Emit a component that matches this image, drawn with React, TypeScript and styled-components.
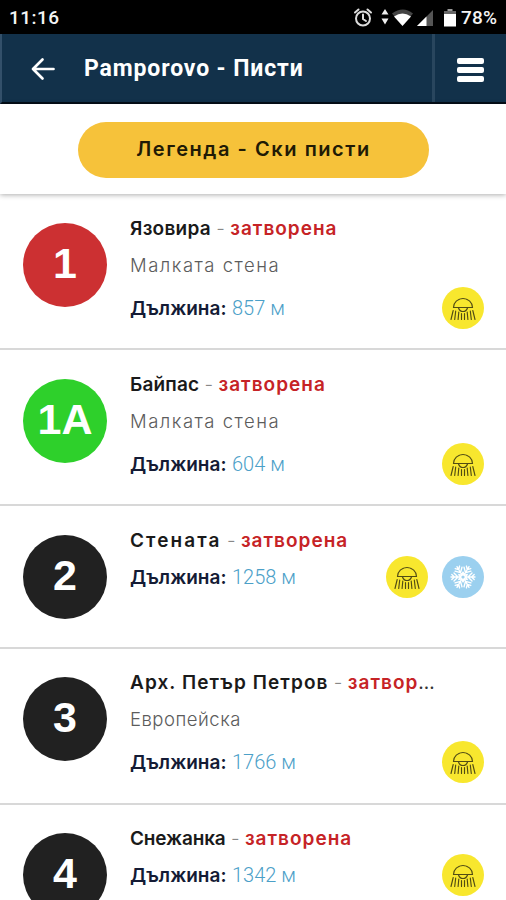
import React from 'react';
import styled, { createGlobalStyle } from 'styled-components';

const Global = createGlobalStyle`
  * { box-sizing: border-box; }
  body { margin: 0; background: #fff; }
`;

const Screen = styled.div`
  height: 900px;
  overflow: hidden;
  display: flex;
  flex-direction: column;
  font-family: Inter, "Liberation Sans", sans-serif;
`;

const StatusBar = styled.div`
  flex: none;
  height: 34px;
  padding: 0 8px 0 9px;
  display: flex;
  align-items: center;
  justify-content: space-between;
  background: #000;
  color: #f4f4f4;
  font: 500 19px/38px Roboto, sans-serif;
`;

const Clock = styled.span`
  padding-top: 2px;
  letter-spacing: 0.45px;
`;

const StatusIcons = styled.div`
  display: flex;
  align-items: center;
  svg { display: block; }
`;

const Battery = styled.span`
  width: 37px;
  margin-left: 5px;
  padding-top: 2px;
  letter-spacing: 0.2px;
`;

const Header = styled.header`
  flex: none;
  height: 70px;
  display: flex;
  align-items: stretch;
  background: #12314a;
  border-bottom: 2px solid #050e18;
  border-left: 2px solid #33506a;
  color: #fff;
`;

const BackButton = styled.button`
  width: 82px;
  padding: 2px 0 0 28px;
  border: 0;
  background: none;
  display: flex;
  align-items: center;
`;

const Title = styled.h1`
  flex: 1;
  margin: 0;
  font: 700 23px/69px Roboto, sans-serif;
  letter-spacing: 0.87px;
  white-space: nowrap;
`;

const MenuButton = styled.button`
  width: 74px;
  padding: 4px 0 0 0;
  border: 0;
  border-left: 3px solid #29465e;
  background: none;
  display: flex;
  flex-direction: column;
  align-items: center;
  justify-content: center;
  gap: 3px;
`;

const MenuLine = styled.span`
  width: 27px;
  height: 6px;
  border-radius: 2px;
  background: #fff;
`;

const LegendBar = styled.div`
  flex: none;
  height: 90px;
  padding: 18px 0 0 1px;
  display: flex;
  justify-content: center;
  align-items: flex-start;
  background: #fff;
  box-shadow: 0 1px 5px rgba(0, 0, 0, 0.32);
  z-index: 1;
`;

const LegendButton = styled.button`
  width: 351px;
  height: 56px;
  padding: 0 0 2px;
  border: 0;
  border-radius: 28px;
  background: #f6c23a;
  color: #211a05;
  font: 600 20px/54px Inter, sans-serif;
  letter-spacing: 1.55px;
  white-space: nowrap;
`;

const Row = styled.li<{ $compact: boolean }>`
  height: ${p => (p.$compact ? 143 : 156)}px;
  padding: 29px 22px 0 23px;
  display: flex;
  align-items: flex-start;
  border-bottom: 2px solid #d8d8d8;
  &:nth-child(n + 4) { padding-top: 28px; }
`;

const List = styled.ul`
  margin: 0;
  padding: 0;
  list-style: none;
`;

const Badge = styled.div<{ $color: string }>`
  flex: none;
  width: 84px;
  height: 84px;
  margin-right: 23px;
  border-radius: 50%;
  background: ${p => p.$color};
  color: #fff;
  text-align: center;
  font: 700 43px/80px "Liberation Sans", Arial, sans-serif;
`;

const Body = styled.div`
  flex: 1;
  min-width: 0;
`;

const Name = styled.div<{ $track: number }>`
  width: 314px;
  height: 24px;
  margin-top: -6px;
  overflow: hidden;
  text-overflow: ellipsis;
  white-space: nowrap;
  color: #333;
  font-size: 19px;
  line-height: 24px;
  letter-spacing: ${p => p.$track}px;
  b { color: #1a1a1a; font-weight: 600; }
`;

const Dash = styled.span`
  color: #888;
  font-weight: 300;
  letter-spacing: 0;
`;

const Status = styled.strong`
  color: #c62326;
  font-weight: 600;
  letter-spacing: 1px;
`;

const Area = styled.div<{ $track: number }>`
  height: 24px;
  margin-top: 12px;
  color: #5c5c5c;
  font-size: 18.5px;
  font-weight: 300;
  line-height: 24px;
  letter-spacing: ${p => p.$track}px;
`;

const Details = styled.div<{ $gap: number }>`
  height: 42px;
  margin-top: ${p => p.$gap}px;
  display: flex;
  align-items: center;
  justify-content: space-between;
`;

const Length = styled.div`
  color: #4ba0c8;
  font: 300 20px/24px Roboto, sans-serif;
  b {
    display: inline-block;
    width: 102px;
    color: #141b35;
    font: 600 19px/24px Inter, sans-serif;
  }
`;

const Features = styled.div`
  display: flex;
  gap: 14px;
`;

const Feature = styled.span<{ $color: string }>`
  width: 42px;
  height: 42px;
  border-radius: 50%;
  background: ${p => p.$color};
  svg { display: block; }
`;

const LampIcon = () => (
  <svg width="42" height="42" viewBox="0 0 42 42" fill="none" stroke="#514c14" strokeWidth="1.15" strokeLinecap="round">
    <path d="M11.500 20.500a9.500 9 0 0 1 19 0zM16 13q5-3 10 0M16.500 21q1.200 3.500 4.500 3.500t4.500-3.500" />
    <path d="M11.200 23.500 9 32.500M13.700 24l-1 8.500M16.800 25l-.7 7.500M19.500 26.500v6M22.500 26.500v6M25.200 25l.7 7.500M28.300 24l1 8.500M30.800 23.500l2.200 9" />
  </svg>
);

const SnowIcon = () => (
  <svg width="42" height="42" viewBox="0 0 42 42" fill="none" stroke="#fff" strokeWidth="1.350" strokeLinecap="round">
    {[0, 60, 120, 180, 240, 300].map(a => (
      <path
        key={a}
        transform={`rotate(${a + 30} 21 21)`}
        d="M21 18.500V9M18.500 9.800 21 12.500l2.500-2.700M17 12l4 4 4-4M21 18.500l-2.600-1.500M21 18.500l2.600-1.500"
      />
    ))}
    <circle cx="21" cy="21" r="2.300" />
  </svg>
);

type Slope = {
  no: string;
  color: string;
  name: string;
  track: number;
  area?: string;
  areaTrack?: number;
  length: string;
  snow?: boolean;
};

const slopes: Slope[] = [
  { no: '1', color: '#cc3032', name: 'Язовира', track: 0.25, area: 'Малката стена', areaTrack: 1.5, length: '857 м' },
  { no: '1A', color: '#2ed02b', name: 'Байпас', track: 0.15, area: 'Малката стена', areaTrack: 1.5, length: '604 м' },
  { no: '2', color: '#212121', name: 'Стената', track: 2.1, length: '1258 м', snow: true },
  { no: '3', color: '#212121', name: 'Арх. Петър Петров', track: 1.07, area: 'Европейска', areaTrack: 0.5, length: '1766 м' },
  { no: '4', color: '#212121', name: 'Снежанка', track: -0.15, length: '1342 м' },
];

export default function App() {
  return (
    <Screen lang="bg">
      <Global />
      <StatusBar>
        <Clock>11:16</Clock>
        <StatusIcons>
          <svg width="91" height="24" viewBox="0 0 91 24" fill="none">
            <g stroke="#ddd" strokeWidth="2" strokeLinecap="round">
              <circle cx="10" cy="13.500" r="7" />
              <path d="M10 9.500V14l3 2M2 7.500l3.500-3M18 7.500l-3.500-3" />
            </g>
            <path d="m32 4 3.500 5.500h-7zM32 19.500l3.500-6h-7z" fill="#eee" />
            <path d="M39 8.500q11-8 21 0l-2.500 3q-8-5.500-16 0z" fill="#444" />
            <path d="M41 11.500q8.500-6 17 0L49.500 21z" fill="#fff" />
            <path d="M80 5v16H64z" fill="#555" />
            <path d="M73.500 11.500V21H64z" fill="#fff" />
          </svg>
          <svg width="12" height="20" viewBox="0 0 12 20">
            <path d="M3.500 2h5v2.500h-5z" fill="#999" />
            <path d="M0 4h12v4H0z" fill="#666" />
            <path d="M0 7h12v12.500H0z" fill="#fff" />
          </svg>
          <Battery>78%</Battery>
        </StatusIcons>
      </StatusBar>
      <Header>
        <BackButton aria-label="Назад">
          <svg width="26" height="26" viewBox="0 0 26 26" fill="none" stroke="#fff" strokeWidth="2.700" strokeLinecap="round" strokeLinejoin="round">
            <path d="M23.500 13H3M12.500 3.500 3 13l9.500 9.500" />
          </svg>
        </BackButton>
        <Title>Pamporovo - Писти</Title>
        <MenuButton aria-label="Меню">
          <MenuLine />
          <MenuLine />
          <MenuLine />
        </MenuButton>
      </Header>
      <LegendBar>
        <LegendButton>Легенда - Ски писти</LegendButton>
      </LegendBar>
      <List>
        {slopes.map(s => (
          <Row key={s.no} $compact={!s.area}>
            <Badge $color={s.color}>{s.no}</Badge>
            <Body>
              <Name $track={s.track}>
                <b>{s.name}</b>
                <Dash> - </Dash>
                <Status>затворена</Status>
              </Name>
              {s.area && <Area $track={s.areaTrack ?? 1}>{s.area}</Area>}
              <Details $gap={s.area ? 10 : 3}>
                <Length><b>Дължина:</b>{s.length}</Length>
                <Features>
                  <Feature $color="#f8e72e"><LampIcon /></Feature>
                  {s.snow && <Feature $color="#9bd0ef"><SnowIcon /></Feature>}
                </Features>
              </Details>
            </Body>
          </Row>
        ))}
      </List>
    </Screen>
  );
}
